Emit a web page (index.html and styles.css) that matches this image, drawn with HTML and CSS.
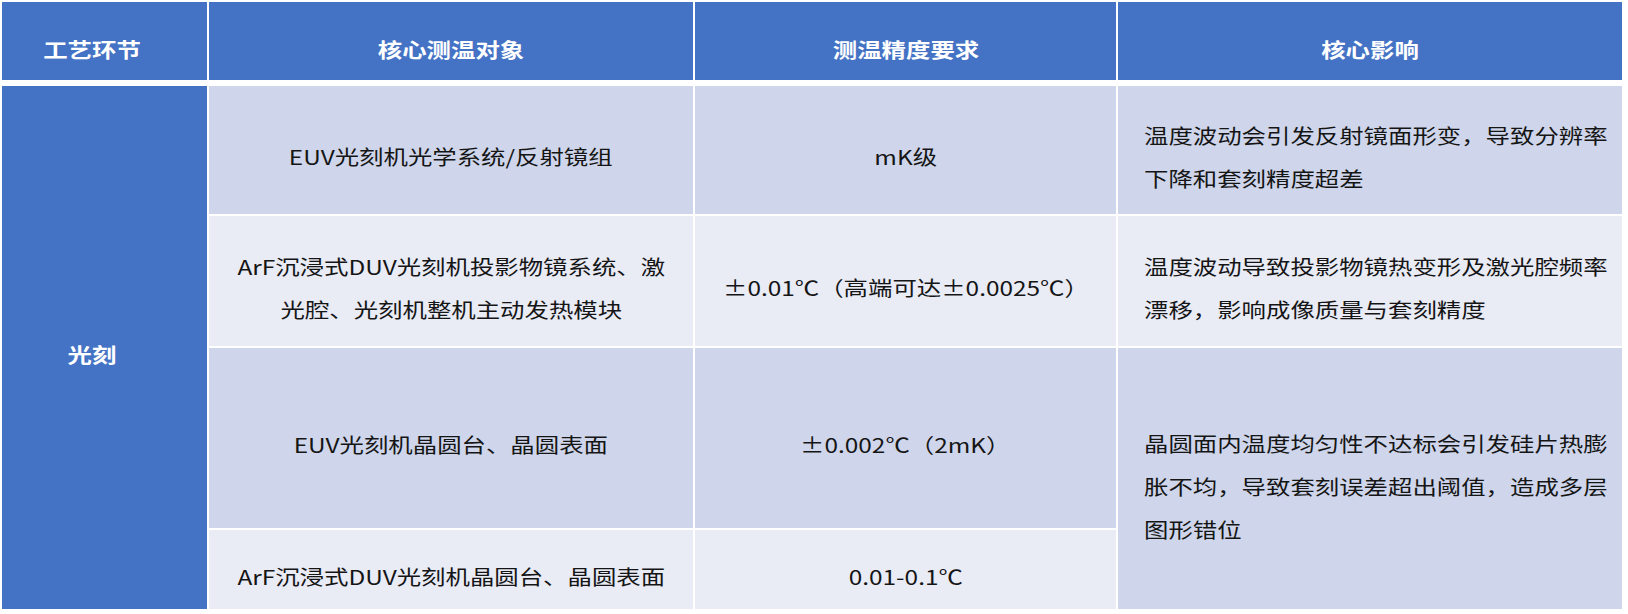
FILE: index.html
```html
<!DOCTYPE html>
<html lang="zh-CN">
<head>
<meta charset="utf-8">
<title>光刻测温</title>
<link rel="stylesheet" href="styles.css">
</head>
<body>
<div class="wrap">
  <div class="head">
    <div class="hcell c1"><span class="t">工艺环节</span></div>
    <div class="hcell"><span class="t">核心测温对象</span></div>
    <div class="hcell"><span class="t">测温精度要求</span></div>
    <div class="hcell"><span class="t">核心影响</span></div>
  </div>
  <div class="body">
    <div class="cell stage"><span class="t">光刻</span></div>

    <div class="cell band1"><span class="t">EUV光刻机光学系统/反射镜组</span></div>
    <div class="cell band1"><span class="t">mK级</span></div>
    <div class="cell band1 left"><span class="t">温度波动会引发反射镜面形变，导致分辨率<br>下降和套刻精度超差</span></div>

    <div class="cell band2"><span class="t">ArF沉浸式DUV光刻机投影物镜系统、激<br>光腔、光刻机整机主动发热模块</span></div>
    <div class="cell band2"><span class="t">±0.01℃（高端可达±0.0025℃）</span></div>
    <div class="cell band2 left"><span class="t">温度波动导致投影物镜热变形及激光腔频率<br>漂移，影响成像质量与套刻精度</span></div>

    <div class="cell band1"><span class="t">EUV光刻机晶圆台、晶圆表面</span></div>
    <div class="cell band1"><span class="t">±0.002℃（2mK）</span></div>
    <div class="cell band1 left merged"><span class="t">晶圆面内温度均匀性不达标会引发硅片热膨<br>胀不均，导致套刻误差超出阈值，造成多层<br>图形错位</span></div>

    <div class="cell band2"><span class="t">ArF沉浸式DUV光刻机晶圆台、晶圆表面</span></div>
    <div class="cell band2"><span class="t">0.01-0.1℃</span></div>
  </div>
</div>
</body>
</html>
```

FILE: styles.css
```css
html, body {
  margin: 0;
  padding: 0;
  background: #ffffff;
}

body {
  font-family: "Noto Sans CJK SC", "Noto Sans", sans-serif;
  font-size: 20px;
  color: #151515;
}

.wrap {
  padding: 2px 0 0 2px;
  width: 1620px;
}

.head,
.body {
  display: grid;
  grid-template-columns: 205px 484px 421px 504px;
  column-gap: 2px;
}

.head {
  grid-template-rows: 78px;
}

.body {
  margin-top: 6px;
  grid-template-rows: 128px 130px 180px 79px;
  row-gap: 2px;
}

.hcell {
  background: #4472c4;
  color: #ffffff;
  font-weight: 700;
  display: flex;
  align-items: center;
  justify-content: center;
  padding-top: 16px;
  box-sizing: border-box;
}

.hcell.c1 {
  padding-right: 26px;
}

.cell {
  display: flex;
  align-items: center;
  justify-content: center;
  padding-top: 13px;
  box-sizing: border-box;
  line-height: 43px;
}

.t {
  display: inline-block;
  transform: scaleX(1.22);
  transform-origin: center center;
  text-align: center;
  white-space: nowrap;
}

.stage {
  grid-row: 1 / span 4;
  background: #4472c4;
  color: #ffffff;
  font-weight: 700;
  padding-right: 26px;
}

.band1 {
  background: #cfd5ea;
}

.band2 {
  background: #e9ebf5;
}

.left {
  justify-content: flex-start;
  padding-left: 26px;
}

.left .t {
  transform-origin: left center;
  text-align: left;
}

.merged {
  grid-row: 3 / span 2;
  grid-column: 4;
  padding-top: 16px;
}
```
